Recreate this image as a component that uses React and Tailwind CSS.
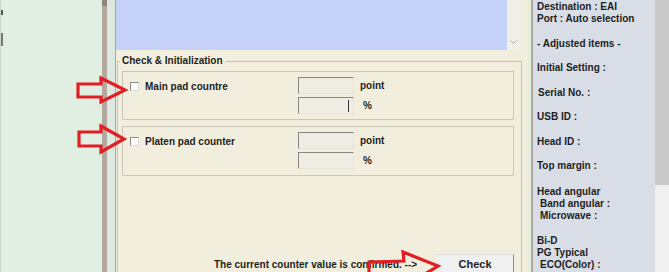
import React from "react";

function Checkbox() {
  return (
    <div className="w-[9px] h-[9px] shrink-0 bg-[#fdfdfd] border border-t-[#8a8a8a] border-l-[#8a8a8a] border-r-[#dcdcdc] border-b-[#dcdcdc]" />
  );
}

function Field({ cursor }) {
  return (
    <div className="w-[56px] h-[17px] bg-[#efede4] border border-t-[#858585] border-l-[#858585] border-r-[#e6e4da] border-b-[#e6e4da] flex items-center justify-end pr-[4px]">
      {cursor && <span className="w-px h-[12px] bg-[#333]" />}
    </div>
  );
}

function CounterBox({ label, cursor, className }) {
  return (
    <div className={"ml-[4px] w-[392px] border border-[#cbc7b8] flex items-start " + className}>
      <div className="w-[175px] pl-[7px] pt-[8px] flex items-center">
        <Checkbox />
        <span className="ml-[6px] leading-[12px] mt-[1px]">{label}</span>
      </div>
      <div className="pt-[5px] flex flex-col gap-[3px]">
        <div className="flex items-center gap-[6px]">
          <Field />
          <span className="leading-[12px]">point</span>
        </div>
        <div className="flex items-center gap-[6px]">
          <Field cursor={cursor} />
          <span className="ml-[3px] leading-[12px]">%</span>
        </div>
      </div>
    </div>
  );
}

export default function App() {
  return (
    <div
      className="relative w-[669px] h-[272px] overflow-hidden flex text-[10px] font-bold text-[#1e1e1e]"
      style={{ fontFamily: '"Liberation Sans", Arial, sans-serif' }}
    >
      {/* left green area */}
      <div className="w-[102px] h-full bg-[#e1efe3] border-l border-[#c9d6ca] flex flex-col">
        <div className="mt-[10px] w-[2px] h-[5px] bg-[#555]" />
        <div className="mt-[18px] w-[2px] h-[13px] bg-[#777]" />
      </div>
      <div className="w-[5px] h-full bg-[#b4a79f] flex flex-col">
        <div className="h-[6px] bg-[#8f857f]" />
      </div>
      <div className="w-[8px] h-full bg-[#dde9de]" />
      <div className="w-[1px] h-full bg-[#a2a9a2]" />

      {/* dialog */}
      <div className="w-[412px] h-full bg-[#f2eedd] flex flex-col">
        <div className="h-[50px] flex shrink-0">
          <div className="w-[391px] h-full bg-[#c6d1f8]" />
          <div className="w-[13px] h-full bg-[#f0f0eb] flex flex-col justify-end items-center pb-[6px]">
            <svg width="7" height="4" viewBox="0 0 7 4">
              <path d="M0.5 0.5 L3.5 3.5 L6.5 0.5" stroke="#a8a8a8" strokeWidth="1" fill="none" />
            </svg>
          </div>
        </div>
        <fieldset className="mt-[5px] ml-[1px] w-[405px] border border-[#c8c4b4] shrink-0">
          <legend className="ml-[2px] px-[2px] leading-[12px] mt-[1px]">Check &amp; Initialization</legend>
          <CounterBox label="Main pad countre" cursor className="mt-[4px] h-[49px]" />
          <CounterBox label="Platen pad counter" className="mt-[6px] h-[50px]" />
          <div className="mt-[78px] flex items-center h-[20px]">
            <span className="ml-[96px] leading-[12px] mt-[1px]">The current counter value is confirmed. --&gt;</span>
            <div className="ml-auto mr-[7px] w-[77px] h-[20px] bg-[#f0f0f0] border-r border-r-[#8d8d8d] border-t border-t-[#dedede] flex items-center justify-center">
              <span className="text-[11px] leading-[12px] -mt-[1px]">Check</span>
            </div>
          </div>
        </fieldset>
      </div>

      {/* separator */}
      <div className="w-[3px] h-full bg-[#e6ebdc]" />
      <div className="w-[2px] h-full bg-[#aaa8a0]" />

      {/* right info panel */}
      <div className="w-[122px] h-full bg-[#d9dde6] pl-[4px] pt-[1px] flex flex-col leading-[12px] whitespace-nowrap">
        <div>Destination : EAI</div>
        <div>Port : Auto selection</div>
        <div className="mt-[13px]">- Adjusted items -</div>
        <div className="mt-[12px]">Initial Setting :</div>
        <div className="mt-[13px] ml-[1px]">Serial No. :</div>
        <div className="mt-[12px]">USB ID :</div>
        <div className="mt-[13px]">Head ID :</div>
        <div className="mt-[12px]">Top margin :</div>
        <div className="mt-[14px]">Head angular</div>
        <div className="ml-[3px]">Band angular :</div>
        <div className="ml-[3px] -mt-[0.5px]">Microwave :</div>
        <div className="mt-[13px]">Bi-D</div>
        <div>PG Typical</div>
        <div className="ml-[3px]">ECO(Color) :</div>
      </div>

      {/* scrollbar */}
      <div className="w-[14px] h-full flex flex-col">
        <div className="h-[185px] bg-[#cacaca]" />
        <div className="flex-1 bg-[#f0f0f0]" />
      </div>

      {/* red annotation arrows */}
      <svg className="absolute inset-0 pointer-events-none" width="669" height="272" viewBox="0 0 669 272">
        <g fill="none" stroke="#e01e24" strokeWidth="3.2" strokeLinejoin="miter">
          <polygon points="78,84 101,84 101,78 125,90 101,102 101,97 78,97" />
          <polygon points="79,132 101,132 101,126 124,139 101,152 101,146 79,146" />
          <polygon points="369,262 404,261 403,252 438,266 412,282 408,276 369,276" />
        </g>
      </svg>
    </div>
  );
}
